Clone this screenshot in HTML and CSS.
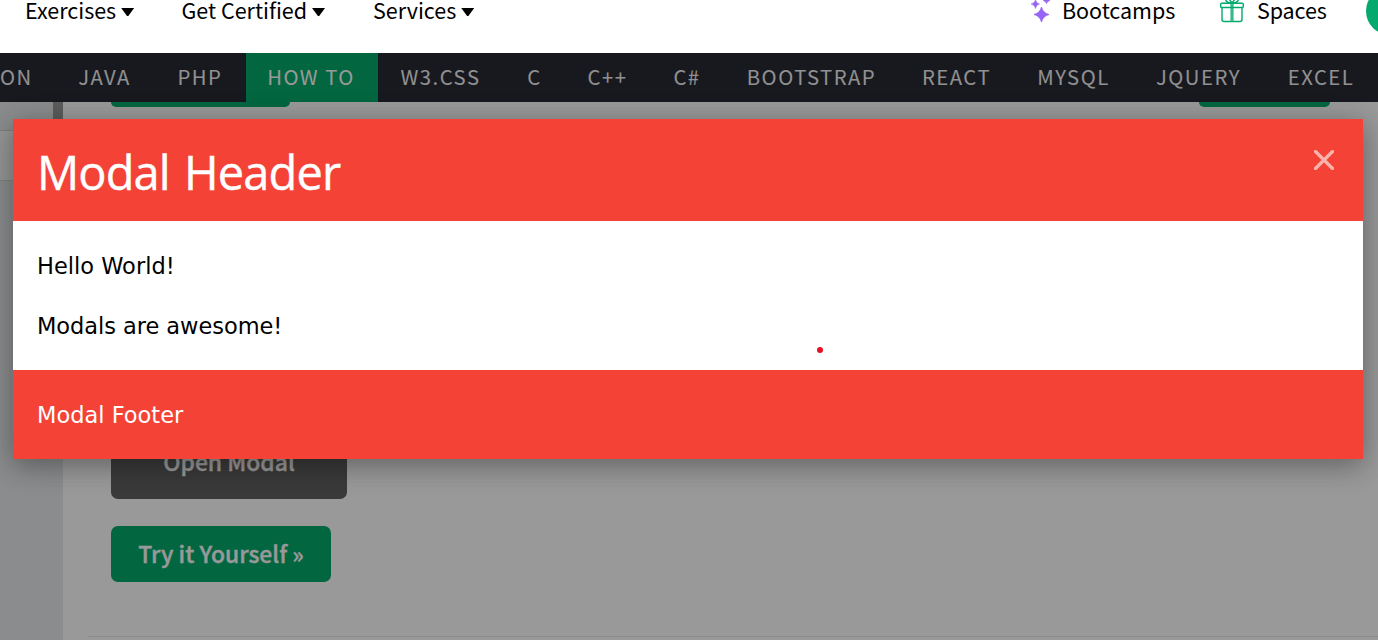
FILE: index.html
```html
<!DOCTYPE html>
<html lang="en">
<head>
<meta charset="utf-8">
<title>How To - Modal</title>
<link rel="stylesheet" href="styles.css">
</head>
<body>
<header class="topbar">
  <a class="top-item exercises">Exercises<i class="caret"></i></a>
  <a class="top-item certified">Get Certified<i class="caret"></i></a>
  <a class="top-item services">Services<i class="caret"></i></a>
  <span class="spacer"></span>
  <svg class="sparkle" width="22" height="24" viewBox="0 0 22 24" fill="#9763f6"><path d="M11.500 7Q13 13 19 14.500Q13 16 11.500 22Q10 16 4 14.500Q10 13 11.500 7Z" stroke="#9763f6" stroke-width=".8"/><path d="M5.500 0Q6.300 3.200 9.500 4Q6.300 4.800 5.500 8.500Q4.700 4.800 1 4Q4.700 3.200 5.500 0Z" stroke="#9763f6" stroke-width=".5"/><path d="M16.500-4Q17 0 20 .5Q17.500 1 16.500 3.500Q15.500 1 13 .5Q16 0 16.500-4Z" stroke="#9763f6" stroke-width=".5"/></svg>
  <a class="top-item bootcamps">Bootcamps</a>
  <svg class="gift" width="24" height="24" viewBox="0 0 24 24" fill="none" stroke="#04aa6d" stroke-width="1.400"><rect x=".7" y="3.200" width="22.600" height="4.300" rx="1"/><path d="M2 7.500V19.500Q2 21.500 4 21.500H20Q22 21.500 22 19.500V7.500M12 3C7 3 5 1 6-2M12 3C17 3 19 1 18-2M12 3L9-1M12 3L15-1"/><path d="M12 3V21.500" stroke-width="3.200" opacity=".8"/></svg>
  <a class="top-item spaces">Spaces</a>
  <span class="avatar"></span>
</header>
<section class="page">
  <nav class="subnav">
    <a class="first">ON</a><a>JAVA</a><a>PHP</a><a class="active">HOW TO</a><a>W3.CSS</a><a>C</a><a>C++</a><a>C#</a><a>BOOTSTRAP</a><a>REACT</a><a>MYSQL</a><a>JQUERY</a><a>EXCEL</a>
  </nav>
  <div class="columns">
    <aside class="sidebar"><div class="side-row"><i class="thumb"></i></div><div class="side-current"></div></aside>
    <main class="content">
      <div class="pager"><span class="prev"></span><span class="next"></span></div>
      <button class="btn open">Open Modal</button>
      <button class="btn try">Try it Yourself »</button>
      <hr class="rule">
    </main>
  </div>
  <div class="overlay">
    <div class="modal">
      <div class="modal-header"><h2>Modal Header</h2><svg class="close" width="20" height="20" viewBox="0 0 20 20"><path d="M1.500 1.500L18.500 18.500M18.500 1.500L1.500 18.500" stroke="#fff" stroke-opacity=".6" stroke-width="3.200" stroke-linecap="round"/></svg></div>
      <div class="modal-body"><p class="hello">Hello World!</p><p class="awesome">Modals are awesome!</p><i class="dot"></i></div>
      <div class="modal-footer"><h3>Modal Footer</h3></div>
    </div>
  </div>
</section>
</body>
</html>
```
FILE: styles.css
```css
* { box-sizing: border-box; }
body { margin: 0; width: 1378px; height: 640px; overflow: hidden; background: #fff; font-family: "Noto Sans CJK SC", sans-serif; }
.topbar { display: flex; height: 53px; padding-left: 25px; color: #000; font-size: 21.5px; font-weight: 400; }
.top-item { display: flex; height: 19px; line-height: 19px; white-space: nowrap; }
.exercises { width: 156.5px; }
.certified { width: 191.5px; }
.services { width: 110px; }
.caret { width: 13px; height: 8px; margin: 8px 0 0 5px; background: #000; clip-path: polygon(0 0, 100% 0, 55% 100%, 45% 100%); }
.spacer { flex: 1; }
.sparkle { margin-right: 10px; }
.bootcamps { width: 158px; letter-spacing: -.05px; }
.gift { margin-right: 13px; }
.spaces { width: 109px; letter-spacing: -.1px; }
.avatar { flex: none; width: 48px; height: 48px; margin: -13px -36px 0 0; border-radius: 50%; background: #04aa6d; }
.page { position: relative; height: 587px; }
.subnav { display: grid; grid-template-columns: 54px 101px 90px 132px 127px 61px 85px 74px 175px 115px 119px 131px 114px; height: 49px; background: #282a35; color: #f1f1f1; font-size: 20.3px; line-height: 47px; letter-spacing: 1.5px; text-align: center; white-space: nowrap; }
.subnav .first { padding-right: 24px; text-align: right; }
.subnav .active { margin: 0 -1px 0 1px; padding-right: 2px; background: #04aa6d; color: #fff; }
.columns { display: flex; height: 538px; }
.sidebar { width: 63px; background: #e7e9eb; }
.side-row { height: 29px; border-bottom: 1px solid #d4d4d4; }
.thumb { display: block; width: 10px; height: 29px; margin-left: 53px; background: #9a9a9a; }
.side-current { height: 50px; background: #fafafa; border-bottom: 1px solid #d4d4d4; }
.content { flex: 1; padding: 0 48px; }
.pager { display: flex; justify-content: space-between; height: 5px; }
.pager span { height: 5px; border-radius: 0 0 7px 7px; background: #04aa6d; }
.prev { width: 179px; }
.next { width: 131px; }
.btn { display: block; border: 0; border-radius: 7px; color: #fff; font: 500 22.9px/55px "Noto Sans CJK SC", sans-serif; -webkit-text-stroke: .35px #fff; white-space: nowrap; padding: 0 0 1px; }
.open { width: 236px; height: 72px; margin-top: 320px; background: #616161; line-height: 69px; padding-bottom: 3px; }
.try { width: 220px; height: 56px; margin-top: 27px; background: #04aa6d; }
.rule { margin: 54px -48px 0 -23px; border: 0; border-top: 1px solid #eaeaea; }
.overlay { position: absolute; inset: 0; padding: 66px 15px 0 13px; background: rgba(0,0,0,.4); }
.modal { height: 340px; background: #fff; box-shadow: 0 6px 24px rgba(0,0,0,.2), 0 6px 30px rgba(0,0,0,.19); }
.modal-header { display: flex; justify-content: space-between; height: 102px; padding: 0 29px 0 24px; background: #f44336; color: #fff; }
.modal-header h2 { margin: 0; font: 400 47px/107px "Open Sans", sans-serif; letter-spacing: -.9px; word-spacing: 3px; -webkit-text-stroke: .4px #fff; }
.close { margin-top: 31px; }
.modal-body { position: relative; height: 149px; padding: 30px 24px 0; }
.modal-body p, .modal-footer h3 { margin: 0; font: 400 22.5px/30px "DejaVu Sans", sans-serif; }
.modal-body .awesome { padding-top: 30px; letter-spacing: -.05px; }
.dot { position: absolute; left: 804px; top: 126px; width: 6px; height: 6px; border-radius: 50%; background: #e81123; }
.modal-footer { height: 89px; padding: 30px 24px; background: #f44336; color: #fff; }
```
